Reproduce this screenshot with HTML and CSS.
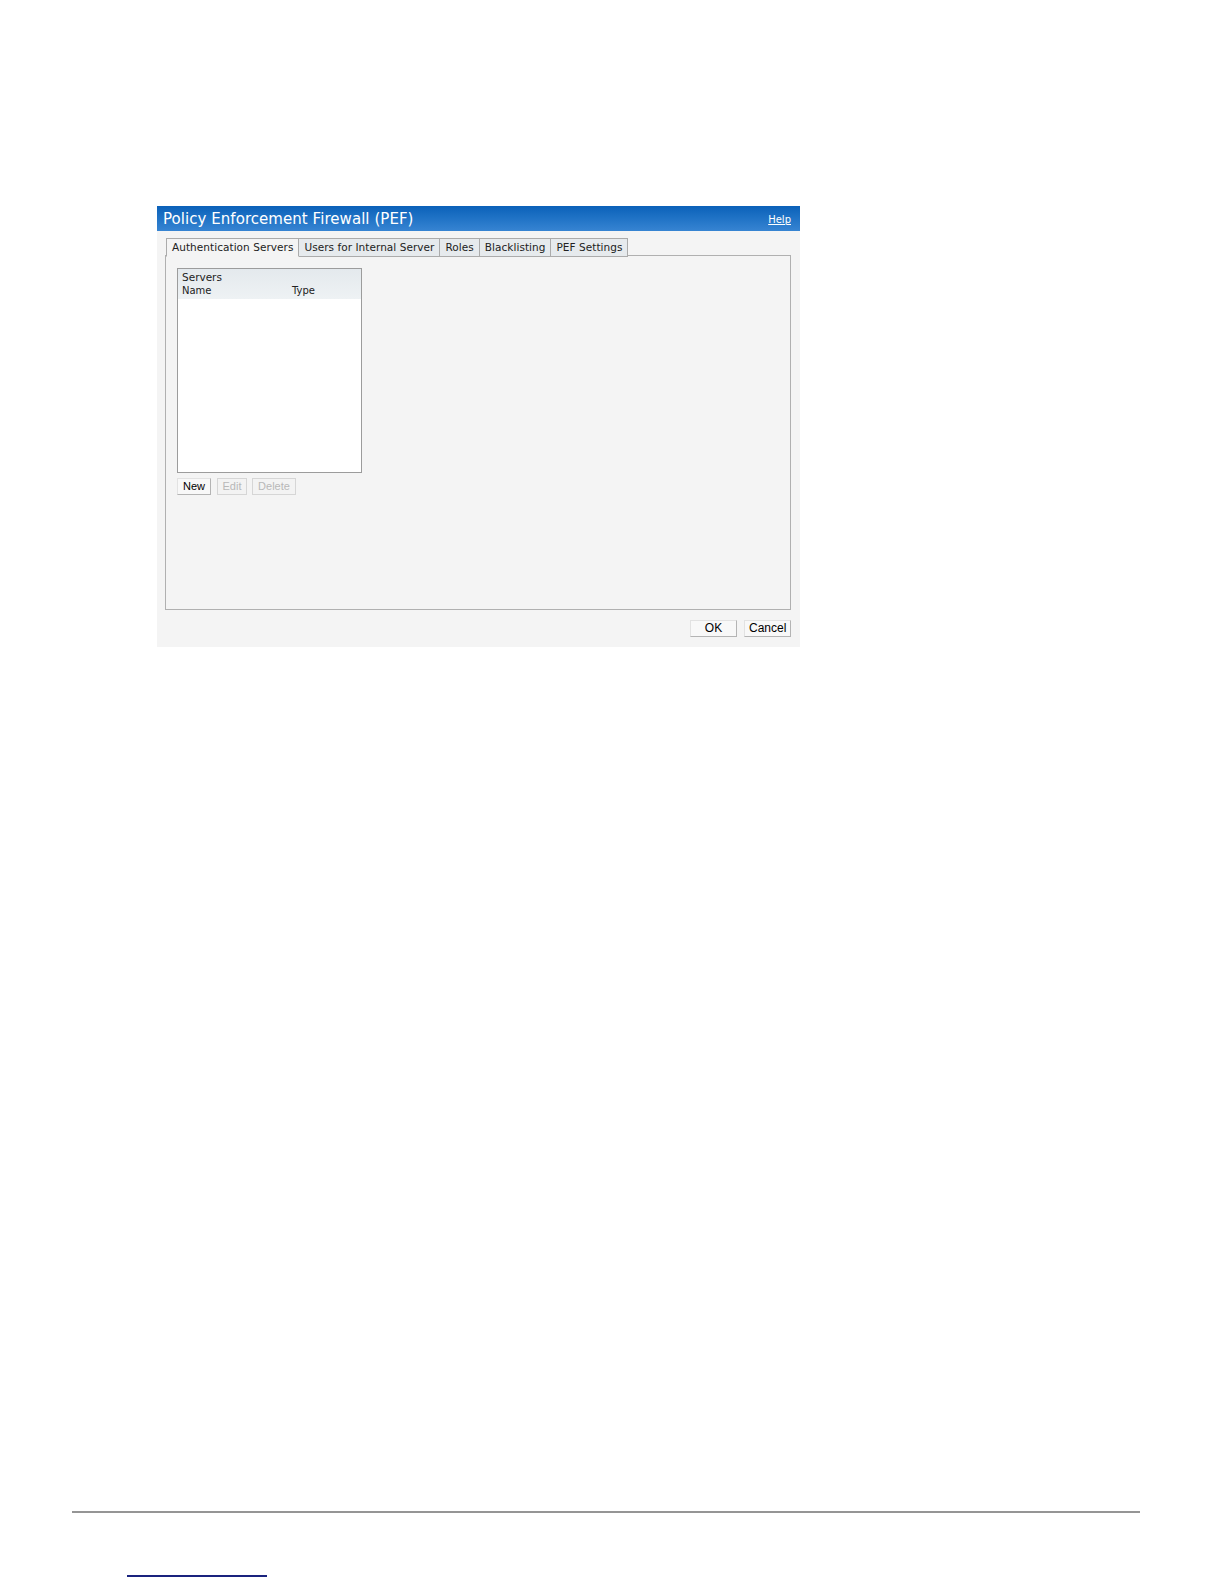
FILE: index.html
```html
<!DOCTYPE html>
<html>
<head>
<meta charset="utf-8">
<link rel="stylesheet" href="styles.css">
</head>
<body>
<div class="page">
  <div class="dialog">
    <div class="dlg-head">
      <span class="dlg-title">Policy Enforcement Firewall (PEF)</span>
      <a class="help" href="#">Help</a>
    </div>
    <div class="dlg-body">
      <div class="tabs">
        <div class="tab active">Authentication Servers</div>
        <div class="tab">Users for Internal Server</div>
        <div class="tab">Roles</div>
        <div class="tab">Blacklisting</div>
        <div class="tab">PEF Settings</div>
      </div>
      <div class="panel">
        <div class="list">
          <div class="list-head">
            <div class="list-title">Servers</div>
            <div class="list-cols"><span class="col-name">Name</span><span class="col-type">Type</span></div>
          </div>
        </div>
        <div class="list-btns">
          <button class="btn">New</button>
          <button class="btn disabled">Edit</button>
          <button class="btn disabled">Delete</button>
        </div>
      </div>
      <div class="dlg-foot">
        <button class="btn wide">OK</button>
        <button class="btn wide">Cancel</button>
      </div>
    </div>
  </div>
  <div class="footer">
    <div class="rule"></div>
    <div class="link-line"></div>
  </div>
</div>
</body>
</html>
```

FILE: styles.css
```css
html, body {
  margin: 0;
  padding: 0;
  background: #ffffff;
}
.page {
  width: 1224px;
  height: 1584px;
  overflow: hidden;
  padding-top: 206px;
  box-sizing: border-box;
}
.dialog {
  margin-left: 157px;
  width: 643px;
  height: 441px;
  background: #f4f4f4;
  display: flex;
  flex-direction: column;
}
.dlg-head {
  height: 25px;
  background: linear-gradient(to bottom, #0b61b9 0%, #2073c6 50%, #3784d2 100%);
  display: flex;
  align-items: center;
  justify-content: space-between;
  padding: 0 9px 0 6px;
}
.dlg-title {
  font-family: "DejaVu Sans", Verdana, sans-serif;
  font-size: 15px;
  color: #ffffff;
  letter-spacing: 0.05px;
  padding-top: 1px;
}
.help {
  font-family: "DejaVu Sans", Verdana, sans-serif;
  font-size: 10px;
  color: #ffffff;
  text-decoration: underline;
  padding-top: 2px;
}
.dlg-body {
  padding: 7px 9px 0 8px;
  display: flex;
  flex-direction: column;
}
.tabs {
  display: flex;
  margin-left: 1px;
  height: 18px;
  position: relative;
  z-index: 1;
  margin-bottom: -1px;
}
.tab {
  font-family: "DejaVu Sans", Verdana, sans-serif;
  font-size: 10.5px;
  letter-spacing: 0.05px;
  color: #222;
  height: 17px;
  line-height: 17px;
  padding: 0 5px;
  background: #e6eaed;
  border: 1px solid #ababab;
  border-left: none;
  border-bottom: 1px solid #ababab;
  white-space: nowrap;
}
.tab:first-child {
  border-left: 1px solid #ababab;
}
.tab.active {
  background: #f4f4f4;
  border-bottom-color: #f4f4f4;
}
.panel {
  height: 341px;
  border: 1px solid #b0b0b0;
  padding: 12px 0 0 11px;
}
.list {
  width: 183px;
  height: 203px;
  border: 1px solid #9c9c9c;
  background: #ffffff;
}
.list-head {
  height: 30px;
  background: linear-gradient(to bottom, #e4e9ed, #eef2f4);
  font-family: "DejaVu Sans", Verdana, sans-serif;
  color: #222;
  padding-left: 4px;
}
.list-title {
  font-size: 10.5px;
  padding-top: 2px;
  line-height: 13px;
}
.list-cols {
  font-size: 10px;
  line-height: 14px;
  display: flex;
}
.col-name {
  width: 110px;
}
.list-btns {
  display: flex;
  gap: 6px;
  margin-top: 5px;
}
.btn {
  font-family: "Liberation Sans", Arial, sans-serif;
  font-size: 11px;
  color: #000;
  height: 17px;
  padding: 0 4px;
  margin: 0;
  background: #f8f8f8;
  border: 1px solid #e2e2e2;
  border-right-color: #b4b4b4;
  border-bottom-color: #b4b4b4;
  line-height: 15px;
}
.btn.disabled {
  color: #b8b8b8;
  background: #f3f3f3;
  border-color: #d6d6d6;
}
.list-btns .btn:nth-child(1) { width: 34px; }
.list-btns .btn:nth-child(2) { width: 30px; }
.list-btns .btn:nth-child(3) { width: 44px; margin-left: -1px; }
.dlg-foot {
  display: flex;
  justify-content: flex-end;
  gap: 7px;
  margin-top: 10px;
}
.btn.wide {
  width: 47px;
  font-size: 12px;
}
.footer {
  margin-top: 864px;
}
.rule {
  margin-left: 72px;
  width: 1068px;
  height: 2px;
  background: #959595;
}
.link-line {
  margin-top: 62px;
  margin-left: 127px;
  width: 140px;
  height: 0;
  border-bottom: 2px solid #1a237e;
}
```
